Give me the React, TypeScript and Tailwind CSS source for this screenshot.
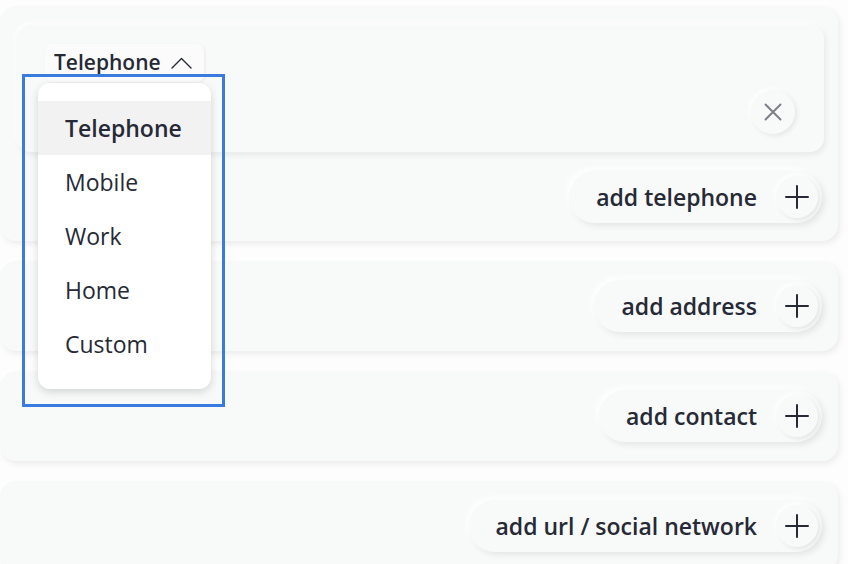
const font = { fontFamily: '"Open Sans", "Noto Sans", sans-serif' };

function PlusIcon() {
  return (
    <svg width="26" height="26" viewBox="0 0 26 26" fill="none" stroke="#262936" strokeWidth="2" strokeLinecap="round">
      <path d="M13 2v22M2 13h22" />
    </svg>
  );
}

function AddPill({ label }: { label: string }) {
  return (
    <div className="flex h-[52px] items-center rounded-full bg-[#f8f9f9] pl-[27px] pr-[4px] shadow-[3px_3px_6px_rgba(0,0,0,0.08),-3px_-3px_6px_rgba(255,255,255,0.9)]">
      <span className="text-[23px] font-semibold text-[#262936]">{label}</span>
      <span className="ml-[19px] flex h-[42px] w-[42px] items-center justify-center rounded-full bg-[#f8f9f9] shadow-[2px_2px_4px_rgba(0,0,0,0.08),-2px_-2px_4px_rgba(255,255,255,0.9)]">
        <PlusIcon />
      </span>
    </div>
  );
}

function Card({ children, className }: { children: React.ReactNode; className?: string }) {
  return (
    <div
      className={
        "mr-[10px] rounded-[16px] bg-[#f8f9f9] shadow-[2px_3px_6px_rgba(0,0,0,0.07),-2px_-2px_5px_rgba(255,255,255,0.9)] " +
        (className ?? "")
      }
    >
      {children}
    </div>
  );
}

const options = ["Telephone", "Mobile", "Work", "Home", "Custom"];

export default function App() {
  return (
    <div className="relative h-[564px] w-[848px] overflow-hidden bg-[#fdfdfd] pt-[6px]" style={font}>
      <div className="flex flex-col gap-[20px]">
        <Card className="pb-[18px] pl-[17px] pr-[14px] pt-[19px]">
          <div className="relative h-[127px] rounded-[14px] bg-[#f8f9f9] shadow-[2px_3px_6px_rgba(0,0,0,0.07),-2px_-2px_5px_rgba(255,255,255,0.9)]">
            <div className="absolute left-[28px] top-[19px] flex h-[38px] items-center gap-[10px] rounded-[7px] bg-[#fbfbfb] pl-[9px] pr-[12px] shadow-[1px_1px_3px_rgba(0,0,0,0.06)]">
              <span className="text-[21px] font-semibold text-[#262936]">Telephone</span>
              <svg width="21" height="12" viewBox="0 0 21 12" fill="none" stroke="#262936" strokeWidth="1.4" strokeLinecap="round" strokeLinejoin="round">
                <path d="M1 11 L10.5 1.5 L20 11" />
              </svg>
            </div>
            <div className="absolute left-[734px] top-[65px] flex h-[44px] w-[44px] items-center justify-center rounded-full bg-[#f8f9f9] shadow-[2px_2px_5px_rgba(0,0,0,0.08),-2px_-2px_4px_rgba(255,255,255,0.9)]">
              <svg width="18" height="18" viewBox="0 0 18 18" fill="none" stroke="#7d8089" strokeWidth="2" strokeLinecap="round">
                <path d="M1.5 1.5L16.5 16.5M16.5 1.5L1.5 16.5" />
              </svg>
            </div>
          </div>
          <div className="mt-[19px] flex justify-end pr-[2px]">
            <AddPill label="add telephone" />
          </div>
        </Card>
        <Card className="flex h-[90px] items-center justify-end pr-[16px]">
          <AddPill label="add address" />
        </Card>
        <Card className="flex h-[90px] items-center justify-end pr-[16px]">
          <AddPill label="add contact" />
        </Card>
        <Card className="flex h-[90px] items-center justify-end pr-[16px]">
          <AddPill label="add url / social network" />
        </Card>
      </div>

      <div className="absolute left-[22px] top-[74px] h-[333px] w-[203px] border-[3px] border-[#3a7be0]" />
      <div className="absolute left-[38px] top-[83px] w-[173px] rounded-[12px] bg-white py-[18px] shadow-[0_3px_8px_rgba(0,0,0,0.15)]">
        {options.map((o, i) => (
          <div
            key={o}
            className={
              "flex h-[54px] items-center pl-[27px] text-[23px] text-[#262936] " +
              (i === 0 ? "bg-[#f2f2f2] font-semibold" : "")
            }
          >
            {o}
          </div>
        ))}
      </div>
    </div>
  );
}
